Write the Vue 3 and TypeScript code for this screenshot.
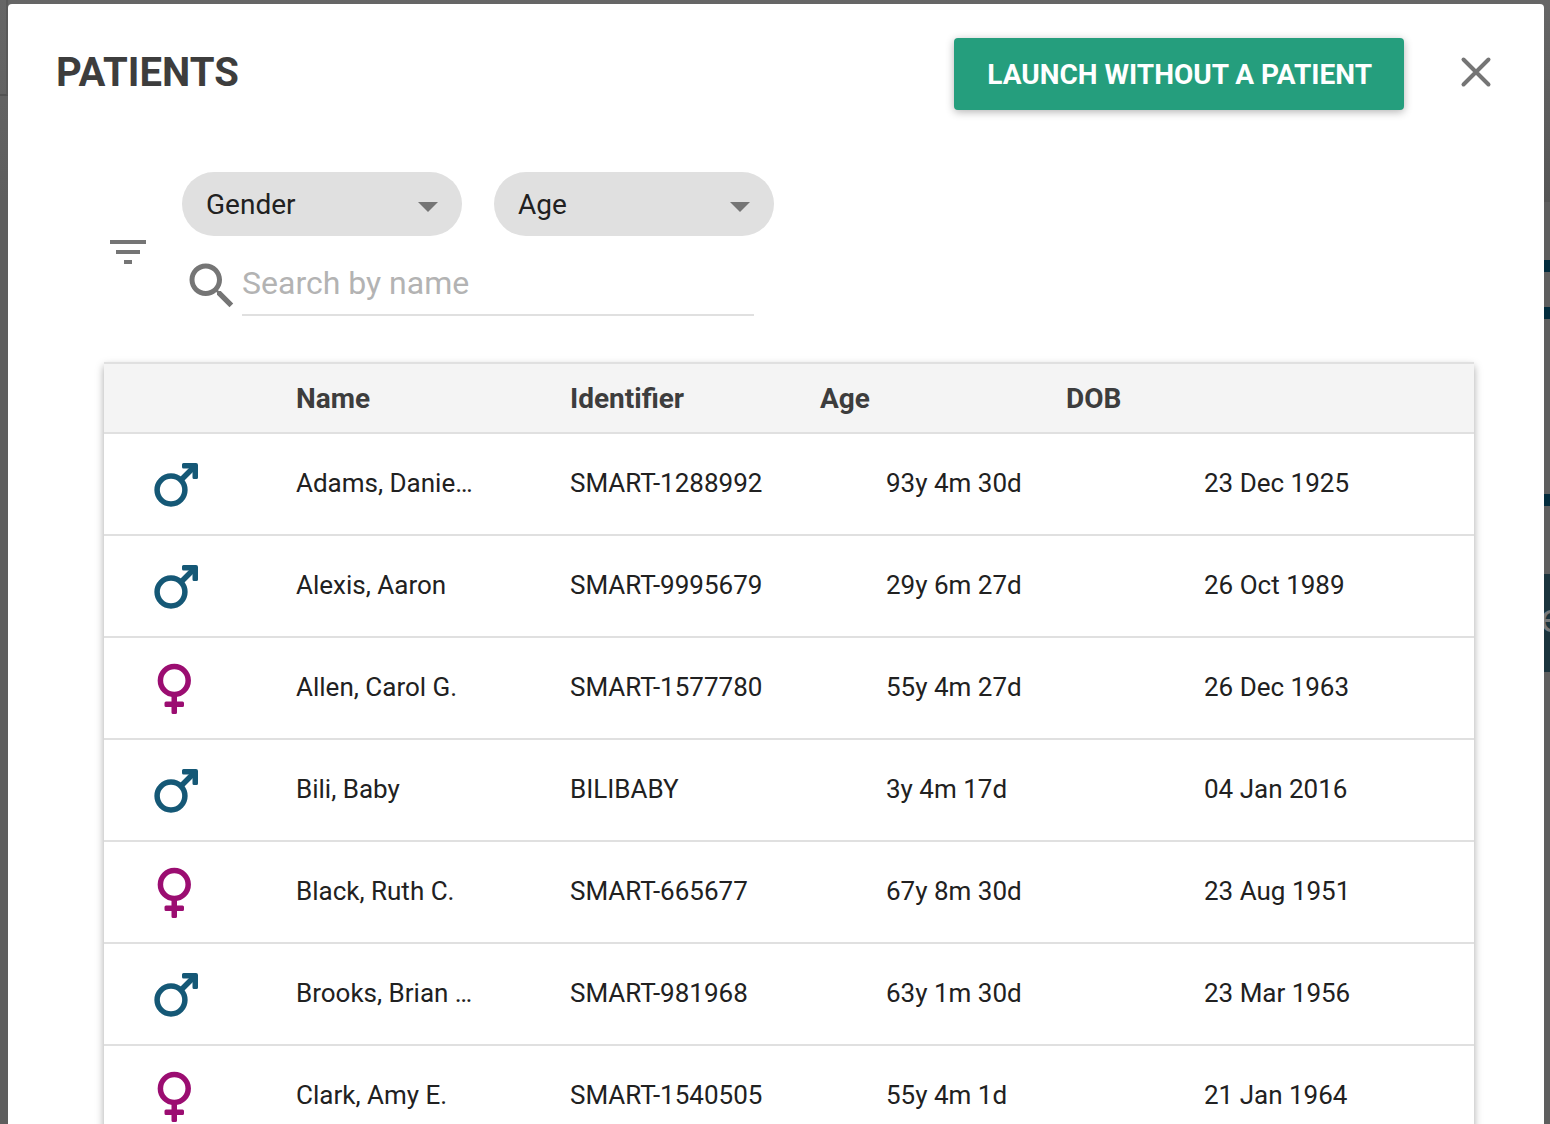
<script setup lang="ts">
import { ref } from 'vue'

interface Patient {
  gender: 'male' | 'female'
  name: string
  identifier: string
  age: string
  dob: string
}

const gender = ref('')
const ageRange = ref('')
const query = ref('')

const patients: Patient[] = [
  { gender: 'male', name: 'Adams, Danie…', identifier: 'SMART-1288992', age: '93y 4m 30d', dob: '23 Dec 1925' },
  { gender: 'male', name: 'Alexis, Aaron', identifier: 'SMART-9995679', age: '29y 6m 27d', dob: '26 Oct 1989' },
  { gender: 'female', name: 'Allen, Carol G.', identifier: 'SMART-1577780', age: '55y 4m 27d', dob: '26 Dec 1963' },
  { gender: 'male', name: 'Bili, Baby', identifier: 'BILIBABY', age: '3y 4m 17d', dob: '04 Jan 2016' },
  { gender: 'female', name: 'Black, Ruth C.', identifier: 'SMART-665677', age: '67y 8m 30d', dob: '23 Aug 1951' },
  { gender: 'male', name: 'Brooks, Brian …', identifier: 'SMART-981968', age: '63y 1m 30d', dob: '23 Mar 1956' },
  { gender: 'female', name: 'Clark, Amy E.', identifier: 'SMART-1540505', age: '55y 4m 1d', dob: '21 Jan 1964' },
]
</script>

<template>
  <div class="page">
    <div class="backdrop" aria-hidden="true">
      <div class="rail"></div>
      <div class="behind">
        <div class="toolbar"></div>
        <div class="bar"></div>
        <div class="bar second"></div>
        <div class="bar third"></div>
        <div class="block"><span>e</span></div>
      </div>
    </div>

    <main class="dialog" role="dialog" aria-labelledby="dialog-title">
      <header class="head">
        <h1 id="dialog-title">PATIENTS</h1>
        <button class="launch" type="button">LAUNCH WITHOUT A PATIENT</button>
        <button class="close" type="button" aria-label="Close">
          <svg viewBox="0 0 48 48" width="48" height="48">
            <path d="M11.5 11.5 36.5 36.5M36.5 11.5 11.5 36.5" stroke="#757575" stroke-width="4" stroke-linecap="round" fill="none" />
          </svg>
        </button>
      </header>

      <section class="filters">
        <svg class="filter-icon" viewBox="0 0 24 24" width="48" height="48" aria-hidden="true">
          <path d="M10 18h4v-2h-4v2zM3 6v2h18V6H3zm3 7h12v-2H6v2z" />
        </svg>
        <div class="controls">
          <div class="selects">
            <div class="chip">
              <select v-model="gender" aria-label="Gender">
                <option value="">Gender</option>
                <option value="male">Male</option>
                <option value="female">Female</option>
              </select>
              <svg class="caret" viewBox="0 0 20 10" width="20" height="10" aria-hidden="true"><path d="M0 0h20L10 10z" /></svg>
            </div>
            <div class="chip">
              <select v-model="ageRange" aria-label="Age">
                <option value="">Age</option>
                <option value="child">0 - 17</option>
                <option value="adult">18+</option>
              </select>
              <svg class="caret" viewBox="0 0 20 10" width="20" height="10" aria-hidden="true"><path d="M0 0h20L10 10z" /></svg>
            </div>
          </div>
          <label class="search">
            <svg viewBox="0 0 24 24" width="60" height="60" aria-hidden="true">
              <path d="M15.5 14h-.79l-.28-.27C15.41 12.59 16 11.11 16 9.5 16 5.91 13.09 3 9.5 3S3 5.91 3 9.5 5.91 16 9.5 16c1.61 0 3.09-.59 4.23-1.57l.27.28v.79l5 4.99L20.49 19l-4.99-5zm-6 0C7.01 14 5 11.99 5 9.5S7.01 5 9.5 5 14 7.01 14 9.5 11.99 14 9.5 14z" />
            </svg>
            <input v-model="query" type="text" placeholder="Search by name" aria-label="Search by name" />
          </label>
        </div>
      </section>

      <table class="patients">
        <colgroup>
          <col class="c-icon" /><col class="c-name" /><col class="c-id" /><col class="c-age" /><col />
        </colgroup>
        <thead>
          <tr>
            <th aria-label="Gender"></th>
            <th scope="col">Name</th>
            <th scope="col">Identifier</th>
            <th scope="col">Age</th>
            <th scope="col">DOB</th>
          </tr>
        </thead>
        <tbody>
          <tr v-for="p in patients" :key="p.identifier">
            <td class="gender">
              <svg v-if="p.gender === 'male'" class="male" viewBox="0 0 52 52" width="52" height="52" role="img" aria-label="Male">
                <circle cx="21" cy="32" r="13.9" fill="none" stroke="currentColor" stroke-width="5.5" />
                <path d="M30.500 22.500 43 10" fill="none" stroke="currentColor" stroke-width="5.5" />
                <path d="M33.500 5H46a2 2 0 0 1 2 2v12.500a1.500 1.500 0 0 1-1.500 1.500h-2.500a1.500 1.500 0 0 1-1.500-1.500V13L40 10.500h-6.500A1.500 1.500 0 0 1 32 9V6.500A1.500 1.500 0 0 1 33.500 5z" fill="currentColor" />
              </svg>
              <svg v-else class="female" viewBox="0 0 52 52" width="52" height="52" role="img" aria-label="Female">
                <circle cx="24.3" cy="18.5" r="13.9" fill="none" stroke="currentColor" stroke-width="5.5" />
                <path d="M21.500 32h5.500v7.500h5.500a1.500 1.500 0 0 1 1.500 1.500v2.500a1.500 1.500 0 0 1-1.500 1.500H27v5.500a1.500 1.500 0 0 1-1.500 1.500H23a1.500 1.500 0 0 1-1.500-1.500V45H16a1.500 1.500 0 0 1-1.500-1.500V41a1.500 1.500 0 0 1 1.500-1.500h5.500z" fill="currentColor" />
              </svg>
            </td>
            <td>{{ p.name }}</td>
            <td>{{ p.identifier }}</td>
            <td class="age">{{ p.age }}</td>
            <td class="dob">{{ p.dob }}</td>
          </tr>
        </tbody>
      </table>
    </main>
  </div>
</template>

<style>
body {
  margin: 0;
}
</style>

<style scoped>
.page {
  position: relative;
  box-sizing: border-box;
  height: 100vh;
  overflow: hidden;
  padding: 4px 6px 0 8px;
  background: #5e5e5e;
  color: #212121;
  font-family: Roboto, "Liberation Sans", sans-serif;
}
.backdrop {
  position: absolute;
  inset: 0;
  display: flex;
  justify-content: space-between;
  background: linear-gradient(#666666, #5e5e5e 200px);
}
.rail {
  width: 6px;
  height: 94px;
  border-right: 2px solid #595959;
  border-bottom: 2px solid #525252;
}
.behind {
  width: 6px;
}
.toolbar {
  box-sizing: border-box;
  height: 202px;
  margin-bottom: 58px;
  background: linear-gradient(#666666, #555555);
}
.bar {
  height: 12px;
  background: #032c3d;
}
.second {
  margin-top: 35px;
}
.third {
  margin-top: 175px;
}
.block {
  display: flex;
  align-items: center;
  height: 98px;
  margin-top: 68px;
  overflow: hidden;
  background: #1b343d;
  color: #77797a;
  font-size: 40px;
  line-height: 90px;
}
.block span {
  margin: 0 0 8px -4px;
}
.dialog {
  position: relative;
  box-sizing: border-box;
  min-height: 100vh;
  padding: 34px 44px 48px 48px;
  border-radius: 4px 4px 0 0;
  background: #fff;
}
.head {
  display: flex;
  align-items: center;
}
h1 {
  margin: 0 auto 0 0;
  padding-bottom: 2px;
  color: #3d3d3d;
  font-size: 40px;
  line-height: 70px;
  font-weight: 700;
}
button,
select,
input {
  font-family: inherit;
}
.launch {
  height: 72px;
  margin-right: 48px;
  padding: 0 32px 0 33px;
  border: 0;
  border-radius: 4px;
  background: #259e7d;
  box-shadow: 0 2px 8px rgba(0, 0, 0, 0.3);
  color: #fff;
  font-size: 28px;
  font-weight: 700;
}
.close {
  width: 48px;
  height: 48px;
  margin-bottom: 4px;
  padding: 0;
  border: 0;
  background: none;
}
svg {
  display: block;
}
.filters {
  display: flex;
  align-items: center;
  gap: 30px;
  margin: 62px 0 30px 48px;
  fill: #757575;
}
.controls {
  padding-bottom: 16px;
}
.selects {
  display: flex;
  gap: 32px;
  margin-bottom: 20px;
}
.chip {
  position: relative;
  width: 280px;
}
select {
  appearance: none;
  width: 100%;
  height: 64px;
  padding: 0 56px 0 24px;
  border: 0;
  border-radius: 32px;
  background: #e0e0e0;
  color: #212121;
  font-size: 28px;
}
.caret {
  position: absolute;
  top: 30px;
  right: 24px;
  pointer-events: none;
}
.search {
  display: flex;
}
input {
  box-sizing: border-box;
  width: 512px;
  height: 60px;
  padding: 0 0 4px;
  border: 0;
  border-bottom: 2px solid #e0e0e0;
  background: none;
  color: #212121;
  font-size: 32px;
}
input::placeholder {
  color: #b3b3b3;
  opacity: 1;
}
.patients {
  width: calc(100% - 74px);
  margin-left: 48px;
  border-spacing: 0;
  table-layout: fixed;
  box-shadow: 0 4px 8px rgba(0, 0, 0, 0.35);
}
.c-icon {
  width: 192px;
}
.c-name {
  width: 274px;
}
.c-id {
  width: 250px;
}
.c-age {
  width: 246px;
}
th {
  box-sizing: border-box;
  height: 72px;
  padding: 0;
  border-top: 2px solid #e0e0e0;
  border-bottom: 2px solid #e0e0e0;
  background: #f4f4f4;
  color: #3d3d3d;
  font-size: 28px;
  font-weight: 700;
  text-align: left;
}
td {
  box-sizing: border-box;
  height: 102px;
  padding: 0 0 2px;
  border-bottom: 2px solid #e0e0e0;
  font-size: 26px;
  white-space: nowrap;
}
.gender {
  padding: 0 0 0 46px;
}
.male {
  color: #155876;
}
.female {
  color: #9b0d71;
}
.age {
  padding-left: 66px;
}
.dob {
  padding-left: 138px;
}
</style>
